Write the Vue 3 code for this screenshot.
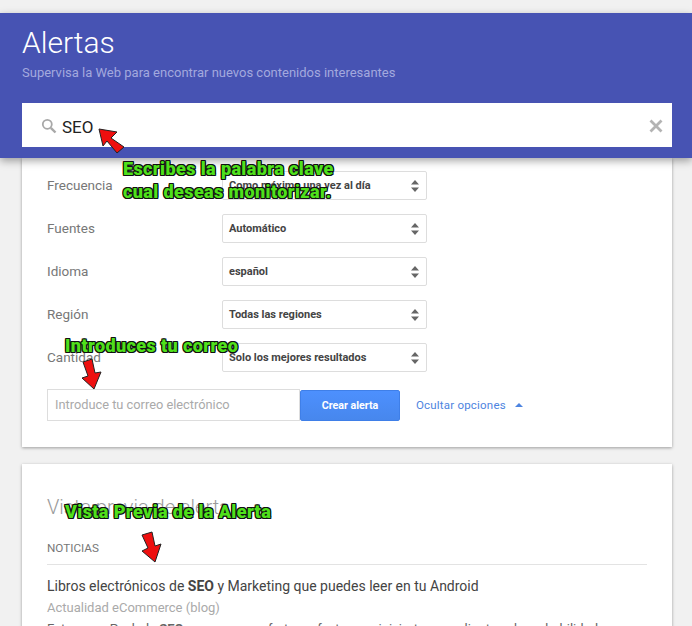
<template>
  <div class="page">
    <div class="main">
      <section class="card options">
        <div class="row" v-for="row in rows" :key="row.label">
          <label>{{ row.label }}</label>
          <div class="select">
            <span>{{ row.value }}</span>
            <svg width="10" height="14" viewBox="0 0 10 14"><path d="M5 1l4 4.500H1zM5 13L1 8.500h8z" fill="#666" /></svg>
          </div>
        </div>
        <div class="delivery">
          <div class="email">Introduce tu correo electrónico</div>
          <button class="create">Crear alerta</button>
          <a class="toggle">Ocultar opciones<i class="caret"></i></a>
        </div>
      </section>

      <section class="card preview">
        <h2>Vista previa de alerta</h2>
        <h3>NOTICIAS</h3>
        <div class="item-title">Libros electrónicos de <b>SEO</b> y Marketing que puedes leer en tu Android</div>
        <div class="source">Actualidad eCommerce (blog)</div>
        <div class="snippet">Este es un Pack de <b>SEO</b> que son una oferta perfecta para iniciarte o ampliar tu saber y habilidades</div>
      </section>
    </div>

    <header class="head">
      <h1>Alertas</h1>
      <p>Supervisa la Web para encontrar nuevos contenidos interesantes</p>
      <div class="search">
        <svg class="lens" width="16" height="16" viewBox="0 0 16 16"><circle cx="6.300" cy="6.300" r="4.500" fill="none" stroke="#a8a8a8" stroke-width="1.800" /><path d="M9.800 9.800l4.700 4.700" stroke="#a8a8a8" stroke-width="2.400" /></svg>
        <span class="query">SEO</span>
        <svg class="clear" width="14" height="14" viewBox="0 0 14 14"><path d="M1.500 1.500l11 11M12.500 1.500l-11 11" stroke="#b3b3b3" stroke-width="2.800" /></svg>
      </div>
    </header>

    <div class="note n1">Escribes la palabra clave<br />cual deseas monitorizar.</div>
    <div class="note n2">Introduces tu correo</div>
    <div class="note n3">Vista Previa de la Alerta</div>

    <svg class="arrow a1" width="28" height="28" viewBox="0 0 28 28"><path d="M1 1L19 4 13 10 26 19 19 25 9 13 5 18z" fill="#ee0f0f" stroke="#222" /></svg>
    <svg class="arrow a2" width="22" height="32" viewBox="0 0 22 32"><path d="M2 4L11 1 14 15 20 14 13 31 1 20 7 18z" fill="#ee0f0f" stroke="#222" /></svg>
    <svg class="arrow a3" width="22" height="32" viewBox="0 0 22 32"><path d="M1 4L11 1 14 15 20 13 14 31 1 20 7 17z" fill="#ee0f0f" stroke="#222" /></svg>
  </div>
</template>

<script setup>
const rows = [
  { label: 'Frecuencia', value: 'Como máximo una vez al día' },
  { label: 'Fuentes', value: 'Automático' },
  { label: 'Idioma', value: 'español' },
  { label: 'Región', value: 'Todas las regiones' },
  { label: 'Cantidad', value: 'Solo los mejores resultados' }
]
</script>

<style>
html, body {
  margin: 0;
  background: #f1f1f1;
}
</style>

<style scoped>
* {
  box-sizing: border-box;
}

.page {
  position: relative;
  width: 692px;
  height: 626px;
  overflow: hidden;
  background: #f1f1f1;
  font-family: Roboto, "Liberation Sans", sans-serif;
}

.head {
  position: absolute;
  top: 13px;
  left: 0;
  width: 692px;
  height: 145px;
  padding: 12px 20px 0 22px;
  background: #4753b3;
  box-shadow: 0 3px 8px rgba(0, 0, 0, 0.35);
}

.head h1 {
  margin: 0;
  font-size: 30px;
  font-weight: 300;
  line-height: 36px;
  color: #fff;
}

.head p {
  margin: 4px 0 0;
  font-size: 13px;
  line-height: 16px;
  color: #a3a9de;
}

.search {
  display: flex;
  align-items: center;
  height: 44px;
  margin-top: 22px;
  padding: 2px 9px 0 19px;
  background: #fff;
}

.query {
  margin-left: 5px;
  padding-top: 1px;
  font-size: 17px;
  color: #222;
}

.clear {
  margin-left: auto;
}

.main {
  padding: 158px 20px 0 22px;
}

.card {
  background: #fff;
  box-shadow: 0 1px 3px rgba(0, 0, 0, 0.35);
}

.options {
  height: 289px;
  padding: 13px 25px 0;
}

.row {
  display: flex;
  align-items: center;
  height: 29px;
  margin-bottom: 14px;
}

.row label {
  position: relative;
  top: -1px;
  width: 175px;
  font-size: 13.500px;
  color: #777;
}

.select {
  display: flex;
  align-items: center;
  justify-content: space-between;
  width: 205px;
  height: 29px;
  padding: 0 6px;
  border: 1px solid #ddd;
  border-radius: 2px;
  font-size: 11px;
  font-weight: 700;
  color: #444;
}

.delivery {
  display: flex;
  align-items: flex-end;
  margin-top: 17px;
}

.email {
  width: 253px;
  height: 32px;
  padding-left: 7px;
  border: 1px solid #ddd;
  font-size: 12.800px;
  line-height: 30px;
  color: #aaa;
}

.create {
  width: 100px;
  height: 31px;
  padding: 0;
  border: 1px solid #3f7fe8;
  border-radius: 2px;
  background: linear-gradient(#4d90fe, #4787ed);
  font-family: inherit;
  font-size: 10.700px;
  font-weight: 700;
  color: #fff;
}

.toggle {
  display: flex;
  align-items: center;
  height: 30px;
  margin-bottom: 1px;
  margin-left: 16px;
  font-size: 11.500px;
  letter-spacing: 0.200px;
  color: #4d84e0;
}

.caret {
  width: 0;
  height: 0;
  margin-left: 9px;
  border-left: 4px solid transparent;
  border-right: 4px solid transparent;
  border-bottom: 4px solid #4d84e0;
}

.preview {
  height: 200px;
  margin-top: 17px;
  padding: 29px 25px 0;
}

.preview h2 {
  margin: 0;
  font-size: 20px;
  font-weight: 300;
  line-height: 28px;
  color: #9a9a9a;
}

.preview h3 {
  margin: 20px 0 0;
  padding-bottom: 8px;
  border-bottom: 1px solid #e3e3e3;
  font-size: 11.700px;
  font-weight: 400;
  line-height: 15px;
  color: #777;
}

.item-title {
  margin-top: 12px;
  font-size: 14px;
  line-height: 18px;
  color: #444;
}

.source {
  margin-top: 5px;
  font-size: 13px;
  line-height: 16px;
  color: #aaa;
}

.snippet {
  margin-top: 5px;
  font-size: 13px;
  line-height: 16px;
  white-space: nowrap;
  color: #666;
}

.note {
  position: absolute;
  font-family: Roboto, sans-serif;
  font-size: 18px;
  font-weight: 900;
  letter-spacing: 0.400px;
  line-height: 23px;
  white-space: nowrap;
  color: #4fe01b;
  text-shadow: 1px 0 #111, -1px 0 #111, 0 1px #111, 0 -1px #111, 1px 1px #111, -1px -1px #111, 1px -1px #111, -1px 1px #111;
}

.n1 {
  left: 123px;
  top: 157px;
}

.n2 {
  left: 65px;
  top: 334px;
}

.n3 {
  left: 65px;
  top: 500px;
}

.arrow {
  position: absolute;
}

.a1 {
  left: 98px;
  top: 128px;
}

.a2 {
  left: 81px;
  top: 358px;
}

.a3 {
  left: 141px;
  top: 531px;
}
</style>
